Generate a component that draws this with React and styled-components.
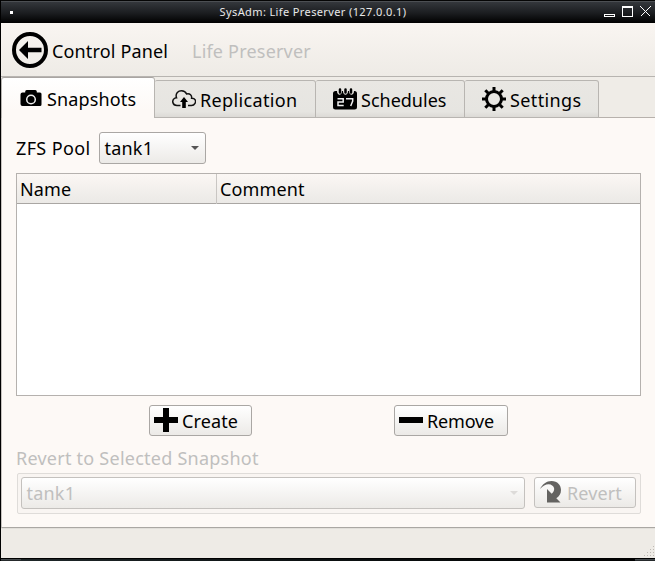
import React from "react";
import styled, { createGlobalStyle, css } from "styled-components";

const GlobalStyle = createGlobalStyle`
  * { box-sizing: border-box; }
  body { margin: 0; overflow: hidden; background: #000; }
  svg { display: block; flex: none; }
`;

const Window = styled.div`
  width: 655px;
  height: 561px;
  display: flex;
  flex-direction: column;
  padding-left: 1px;
  background: #000;
  color: #000;
  font: 18px/26px "Noto Sans", sans-serif;
  white-space: nowrap;
`;

const TitleBar = styled.header`
  height: 23px;
  flex: none;
  display: grid;
  grid-template-columns: 60px 1fr 60px;
  align-items: center;
  border-top: 1px solid #050505;
  background: linear-gradient(#4c4f53 0 1px, #34373c 1px, #1b1d20 55%, #000);
`;

const WindowMenu = styled.span`
  width: 3px;
  height: 3px;
  margin-left: 9px;
  background: #fff;
`;

const WindowTitle = styled.h1`
  margin: 0;
  padding: 0 30px 0 0;
  text-align: center;
  color: #e8e8e8;
  font-size: 11px;
  line-height: 20px;
  font-weight: 400;
  letter-spacing: 0.38px;
`;

const Toolbar = styled.nav`
  height: 54px;
  flex: none;
  display: flex;
  align-items: center;
  padding-left: 11px;
  background: linear-gradient(#f9f5f1, #eeebe6);
  border-bottom: 1px solid #b7b4b0;
  svg {
    margin-top: 1px;
  }
`;

const Label = styled.span`
  width: ${(p) => (p.$width ? p.$width + "px" : "auto")};
  flex: none;
  letter-spacing: ${(p) => p.$spacing || "0"};
  color: ${(p) => (p.$muted ? "#c0bfbe" : "inherit")};
  ${Toolbar} & {
    padding-top: 2px;
  }
`;

const BackLink = styled.a`
  display: flex;
  align-items: center;
  gap: 4px;
  width: 180px;
`;

const TabBar = styled.div`
  height: 41px;
  flex: none;
  display: flex;
  align-items: flex-end;
  background: linear-gradient(transparent 40px, #b7b1ac 40px), #efece7;
`;

const Tab = styled.div`
  width: ${(p) => p.$width}px;
  height: 38px;
  display: flex;
  align-items: center;
  gap: 4px;
  padding: 0 0 0 17px;
  border: 1px solid #b8b5b1;
  border-left-width: 0;
  border-radius: 2px 3px 0 0;
  background: linear-gradient(#e9e7e3, #e6e5e1 85%, #dcdad6);
  ${Label} {
    padding-top: ${(p) => (p.$active ? 0 : 2)}px;
  }
  ${(p) =>
    p.$active &&
    css`
      height: 41px;
      padding: 2px 0 0 17px;
      border-left-width: 1px;
      border-bottom: 0;
      border-top-color: #a9a5a2;
      border-radius: 3px 3px 0 0;
      background: linear-gradient(#fff, #fdf9f6 80%);
    `}
`;

const Page = styled.main`
  height: 410px;
  flex: none;
  display: flex;
  flex-direction: column;
  padding: 14px 14px 0 14px;
  border-left: 1px solid #c7c3bf;
  border-bottom: 1px solid #aaa7a3;
  background: #fdf9f6;
`;

const PoolRow = styled.div`
  display: flex;
  align-items: center;
  height: 32px;
`;

const control = css`
  display: flex;
  align-items: center;
  border: 1px solid ${(p) => (p.$disabled ? "#c4c1be" : "#aaa7a4")};
  border-radius: 3px;
  background: linear-gradient(#fff, #eceae7);
  color: ${(p) => (p.$disabled ? "#c0bfbe" : "#000")};
`;

const Select = styled.div`
  ${control}
  width: ${(p) => p.$width}px;
  height: 32px;
  justify-content: space-between;
  padding: 0 6px 0 4.5px;
`;

const Button = styled.div`
  ${control}
  width: ${(p) => p.$width}px;
  height: 31px;
  gap: 4px;
  padding: 0 0 0 4px;
  ${Label} {
    padding-top: 1px;
  }
  svg {
    margin-bottom: 1px;
  }
`;

const Table = styled.div`
  height: 223px;
  margin-top: 9px;
  margin-right: -1px;
  width: 625px;
  border: 1px solid #b5b1ae;
  background: #fff;
`;

const TableHeader = styled.div`
  height: 30px;
  display: grid;
  grid-template-columns: 200px 1fr;
  border-bottom: 1px solid #a9a6a3;
  background: linear-gradient(#fbf7f4, #ebe9e6);
`;

const HeaderCell = styled.div`
  padding: 2px 3px;
  border-right: ${(p) => (p.$divider ? "1px solid #c9c6c3" : "0")};
  letter-spacing: 0.12px;
`;

const Actions = styled.div`
  display: flex;
  gap: 142px;
  margin-top: 9px;
  padding-left: 133px;
`;

const GroupTitle = styled.div`
  margin-top: 9px;
  height: 28px;
  color: #c0bfbe;
  letter-spacing: 0.24px;
`;

const Group = styled.section`
  display: flex;
  gap: 9px;
  width: 624px;
  height: 41px;
  margin-left: 1px;
  padding: 3px;
  border: 1px solid #dfdcd9;
  border-radius: 2px;
  background: #f9f5f2;
`;

const StatusBar = styled.footer`
  height: 30px;
  flex: none;
  display: flex;
  align-items: flex-end;
  justify-content: flex-end;
  background: #eeebe6;
  border-top: 1px solid #e2dfda;
`;

const Frame = styled.div`
  height: 3px;
  flex: none;
  display: flex;
  justify-content: space-between;
  border-top: 1px solid #000;
  background: linear-gradient(90deg, #20282a, #0d1213 45%, #000);
`;

const FrameCorner = styled.span`
  width: 20px;
  background: #454a4d;
  border-bottom: 1px solid #262a2c;
`;

const BackIcon = () => (
  <svg width="36" height="36" viewBox="0 0 36 36">
    <circle cx="18" cy="18" r="16" fill="none" stroke="#000" strokeWidth="4" />
    <path d="M7 18l9-9v6.700h13.500v4.600H16V27z" />
  </svg>
);

const CameraIcon = () => (
  <svg width="24" height="24" viewBox="0 0 24 24">
    <path d="M3.500 5.500h2.700V4.500q0-1.500 1.500-1.500h8.600q1.500 0 1.500 1.500v1H21Q22.500 5.500 22.500 7v10.500Q22.500 19 21 19h-17.500Q1.500 19 1.500 17V7.500Q1.500 5.500 3.500 5.500z" />
    <circle cx="12" cy="12.500" r="4.300" fill="none" stroke="#eee" strokeWidth="1.500" />
  </svg>
);

const CloudIcon = () => (
  <svg width="24" height="24" viewBox="0 0 24 24">
    <path d="M8.500 18.500H5C.3 18.500-.6 13 2.900 11.200c.8-.5 1.600-.5 1.600-.5C3 6 6.500 3.800 9.500 3.800c2.700 0 4.200 1.200 5.100 3.200 3.400-.8 5.500 1.500 5 4.300 3.700-.1 4.700 2.800 3.400 5-.8 1.500-2 2.200-3.600 2.200H16" fill="none" stroke="#111" strokeWidth="1.500" />
    <path d="M12 10l4 5h-2.200v6h-3.600v-6H8z" />
  </svg>
);

const CalendarIcon = () => (
  <svg width="24" height="24" viewBox="0 0 24 24">
    <path d="M2.500 4H4c0 5 5 5 5 0h1c0 5 5 5 5 0h1c0 5 5 5 5 0h.5Q24 4 24 6.500V20q0 2.500-2.500 2.500h-19Q0 22.500 0 20V6.500Q0 4 2.500 4z" />
    <path d="M7 2.500v3M12.500 2.500v3M18 2.500v3" stroke="#000" strokeWidth="2.500" strokeLinecap="round" />
    <path d="M4.500 11.700h5.700V15H5v3.500h5.700M13 11.700h6.700V14l-2 5" fill="none" stroke="#eee" strokeWidth="1.500" />
  </svg>
);

const GearIcon = () => (
  <svg width="24" height="24" viewBox="0 0 24 24">
    <circle cx="12" cy="12" r="7.500" fill="none" stroke="#000" strokeWidth="3" />
    <path d="M12 0v4M12 20v4M0 12h4M20 12h4M3.300 3.300l3 3M17.700 17.700l3 3M20.700 3.300l-3 3M3.300 20.700l3-3" stroke="#000" strokeWidth="3" />
  </svg>
);

const PlusIcon = () => (
  <svg width="24" height="24" viewBox="0 0 24 24" shapeRendering="crispEdges">
    <path d="M9 0h6v9h9v6h-9v9H9v-9H0V9h9z" />
  </svg>
);

const MinusIcon = () => (
  <svg width="24" height="24" viewBox="0 0 24 24" shapeRendering="crispEdges">
    <path d="M0 9h24v6H0z" />
  </svg>
);

const RevertIcon = () => (
  <svg width="24" height="24" viewBox="0 0 24 24">
    <path fill="#646361" d="M1 9C3.500 4 7.500 1 12.500 1c6 0 9.500 4.300 9.500 9 0 4-1.800 6.200-4.700 8.200L21.500 22.500H8V9l4.700 4.700c3-2.800 3.300-5.800.8-8C10 3 5 4.500 1 9z" />
  </svg>
);

const ArrowIcon = ({ muted }) => (
  <svg width="8" height="4" viewBox="0 0 8 4">
    <path d="M0 0h8L4 4z" fill={muted ? "#dddbd9" : "#555"} />
  </svg>
);

const WindowControls = () => (
  <svg width="60" height="22" viewBox="0 0 60 22" fill="none" stroke="#fff" shapeRendering="crispEdges">
    <path d="M9.500 13.500h10v2h-10zM27.500 5.500h10v10h-10zM27 6.500h11" />
    <path d="M45.500 5.500l10 10M55.500 5.500l-10 10" />
  </svg>
);

const GRIP_DOTS = [[10, 0], [7, 3], [10, 3], [4, 6], [7, 6], [10, 6], [1, 9], [4, 9], [7, 9], [10, 9]];

const ResizeGrip = () => (
  <svg width="12" height="12" viewBox="0 0 12 12" fill="#bdb9b4" shapeRendering="crispEdges">
    {GRIP_DOTS.map(([x, y]) => (
      <rect key={`${x}-${y}`} x={x} y={y} width="1" height="1" />
    ))}
  </svg>
);

export default function App() {
  return (
    <>
      <GlobalStyle />
      <Window>
        <TitleBar>
          <WindowMenu />
          <WindowTitle>SysAdm: Life Preserver (127.0.0.1)</WindowTitle>
          <WindowControls />
        </TitleBar>
        <Toolbar>
          <BackLink>
            <BackIcon />
            <Label $spacing="0.15px">Control Panel</Label>
          </BackLink>
          <Label $muted $spacing="0.2px">Life Preserver</Label>
        </Toolbar>
        <TabBar>
          <Tab $width={154} $active><CameraIcon /><Label $spacing="0.15px">Snapshots</Label></Tab>
          <Tab $width={161}><CloudIcon /><Label $spacing="0.35px">Replication</Label></Tab>
          <Tab $width={149}><CalendarIcon /><Label>Schedules</Label></Tab>
          <Tab $width={134}><GearIcon /><Label $spacing="0.38px">Settings</Label></Tab>
        </TabBar>
        <Page>
          <PoolRow>
            <Label $width={83} $spacing="0.36px">ZFS Pool</Label>
            <Select $width={107}><Label $spacing="0.2px">tank1</Label><ArrowIcon /></Select>
          </PoolRow>
          <Table>
            <TableHeader>
              <HeaderCell $divider>Name</HeaderCell>
              <HeaderCell>Comment</HeaderCell>
            </TableHeader>
          </Table>
          <Actions>
            <Button $width={103}><PlusIcon /><Label $spacing="0.12px">Create</Label></Button>
            <Button $width={114}><MinusIcon /><Label $spacing="-0.15px">Remove</Label></Button>
          </Actions>
          <GroupTitle>Revert to Selected Snapshot</GroupTitle>
          <Group>
            <Select $width={504} $disabled><Label $spacing="0.2px">tank1</Label><ArrowIcon muted /></Select>
            <Button $width={102} $disabled><RevertIcon /><Label $spacing="0.12px">Revert</Label></Button>
          </Group>
        </Page>
        <StatusBar><ResizeGrip /></StatusBar>
        <Frame><FrameCorner /><FrameCorner /></Frame>
      </Window>
    </>
  );
}
